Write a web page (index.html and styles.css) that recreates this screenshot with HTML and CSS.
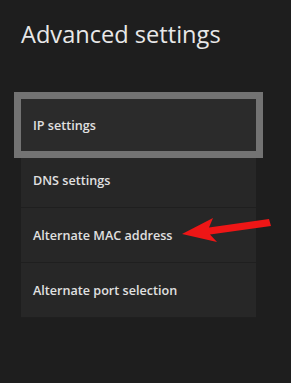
FILE: index.html
```html
<!DOCTYPE html>
<html lang="en">
<head>
    <meta charset="UTF-8">
    <meta name="viewport" content="width=device-width, initial-scale=1.0">
    <title>Advanced settings</title>
    <link rel="stylesheet" href="styles.css">
</head>
<body>

    <div class="screen">
        <h1 class="page-title">Advanced settings</h1>

        <!-- Settings list -->
        <div class="menu">
            <div class="menu-item focused">IP settings</div>
            <div class="menu-item">DNS settings</div>
            <div class="menu-item">Alternate MAC address</div>
            <div class="menu-item">Alternate port selection</div>
        </div>

        <!-- Pointer arrow -->
        <svg class="pointer" width="100" height="40" viewBox="175 212 100 40">
            <polygon points="182,234 213,218 209,227.5 269,219 271,226 210,234.5 217,242" fill="#ee1616"/>
        </svg>
    </div>

</body>
</html>
```

FILE: styles.css
```css
* {
    margin: 0;
    padding: 0;
    box-sizing: border-box;
}
body {
    background-color: #1e1e1e;
    font-family: 'Open Sans', 'Noto Sans', sans-serif;
    color: #e4e4e4;
}
.screen {
    position: relative;
    width: 291px;
    height: 383px;
    padding-top: 18px;
}
.page-title {
    font-size: 23.6px;
    font-weight: 400;
    line-height: 32px;
    padding-left: 21px;
    color: #e8e8e8;
}
.menu {
    margin-top: 49px;
    margin-left: 21px;
    width: 235px;
    display: flex;
    flex-direction: column;
}
.menu-item {
    height: 55px;
    display: flex;
    align-items: center;
    padding-left: 12px;
    background-color: #272727;
    border-bottom: 1px solid #1f1f1f;
    font-size: 12.6px;
    font-weight: 600;
    color: #e0e0e0;
}
.menu-item.focused {
    position: relative;
    height: 52px;
    margin-bottom: 2px;
    background-color: #2b2b2b;
    outline: 7px solid #737373;
    border-bottom: none;
}
.pointer {
    position: absolute;
    left: 175px;
    top: 212px;
}
```
